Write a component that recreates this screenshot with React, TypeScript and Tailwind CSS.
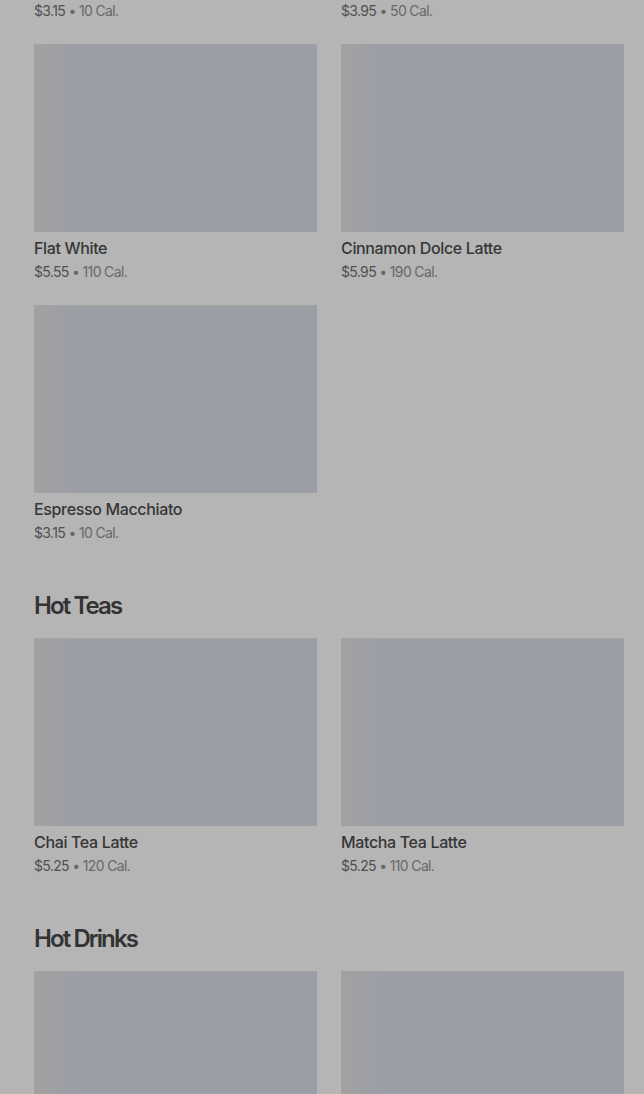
import React from "react";

type Item = { name: string; price: string; cal: string };

const sections: { title?: string; items: Item[] }[] = [
  {
    items: [
      { name: "Espresso", price: "$3.15", cal: "10 Cal." },
      { name: "Caffè Americano", price: "$3.95", cal: "50 Cal." },
      { name: "Flat White", price: "$5.55", cal: "110 Cal." },
      { name: "Cinnamon Dolce Latte", price: "$5.95", cal: "190 Cal." },
      { name: "Espresso Macchiato", price: "$3.15", cal: "10 Cal." },
    ],
  },
  {
    title: "Hot Teas",
    items: [
      { name: "Chai Tea Latte", price: "$5.25", cal: "120 Cal." },
      { name: "Matcha Tea Latte", price: "$5.25", cal: "110 Cal." },
    ],
  },
  {
    title: "Hot Drinks",
    items: [
      { name: "Hot Chocolate", price: "$4.45", cal: "370 Cal." },
      { name: "Steamed Milk", price: "$3.65", cal: "190 Cal." },
    ],
  },
];

function Card({ item }: { item: Item }) {
  return (
    <div className="flex flex-col">
      <div className="h-[188px] w-full bg-[linear-gradient(90deg,#a1a1a2_0px,#a1a1a2_10px,#9c9ea6_45px,#9c9ea6_100%)] border-t border-[#a3a3a5]" />
      <div className="mt-[4px] text-[16px] leading-[24px] font-medium text-[#363636] tracking-[-0.35px]">
        {item.name}
      </div>
      <div className="mt-[2px] text-[14px] leading-[20px] text-[#505050] tracking-[-0.65px]">
        {item.price}
        <span className="text-[#686868]"> • {item.cal}</span>
      </div>
    </div>
  );
}

export default function App() {
  return (
    <div
      className="min-h-[1094px] w-[644px] overflow-hidden bg-[#b5b5b5]"
      style={{ fontFamily: "Inter, 'Liberation Sans', sans-serif" }}
    >
      <div className="-mt-[217px] pl-[34px] pr-[20px] flex flex-col">
        {sections.map((s, i) => (
          <div key={i} className={i === 0 ? "" : "mt-[47px]"}>
            {s.title && (
              <h2 className="mb-[16px] text-[24px] leading-[32px] font-semibold text-[#333333] tracking-[-1.9px]">
                {s.title}
              </h2>
            )}
            <div className="grid grid-cols-2 gap-x-[24px] gap-y-[23px]">
              {s.items.map((it, j) => (
                <Card key={j} item={it} />
              ))}
            </div>
          </div>
        ))}
      </div>
    </div>
  );
}
